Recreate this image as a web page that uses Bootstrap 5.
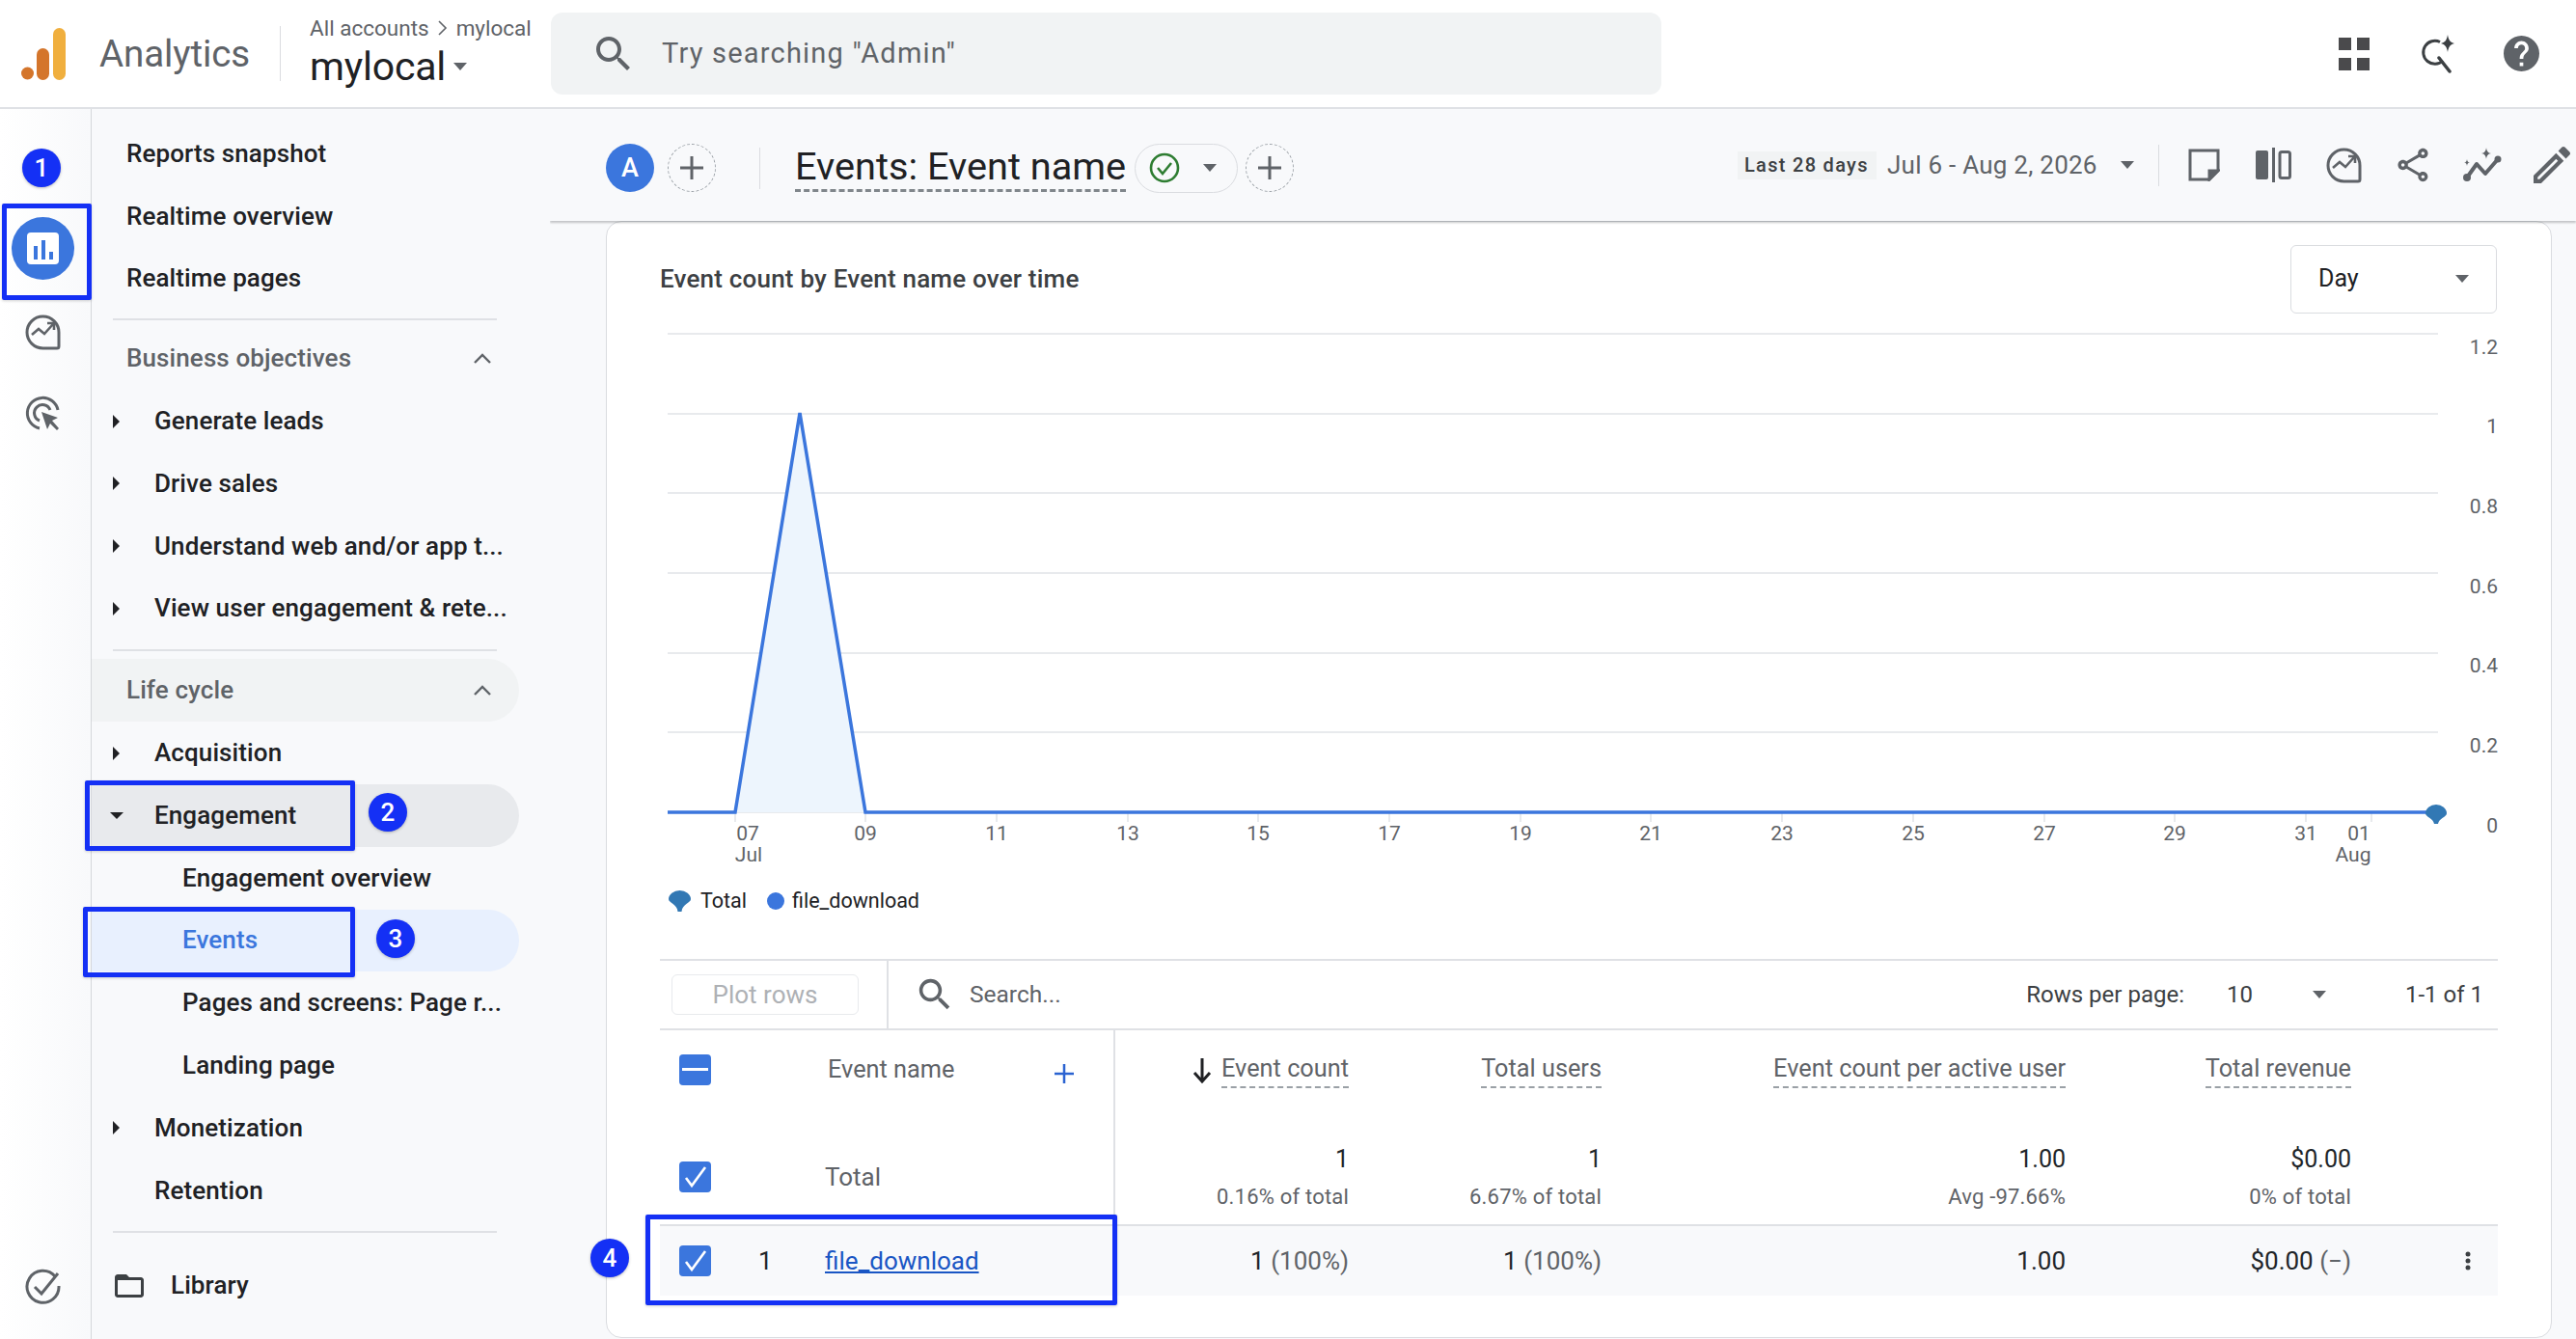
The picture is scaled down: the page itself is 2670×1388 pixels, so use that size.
<!DOCTYPE html>
<html lang="en">
<head>
<meta charset="UTF-8">
<title>Analytics - Events</title>
<link href="https://cdn.jsdelivr.net/npm/bootstrap@5.3.0/dist/css/bootstrap.min.css" rel="stylesheet">
<style>
html, body { height: 1388px; overflow: hidden; }
body { font-family: Roboto, "Liberation Sans", sans-serif; color: #202124; background: #f8f9fb; font-size: 26px; position: relative; }
svg { display: block; flex: none; }

.ga-top { height: 113px; background: #fff; border-bottom: 2px solid #dfe1e5; }
.ga-logo { margin-left: 22px; width: 46px; height: 54px; }
.ga-brand { margin-left: 35px; width: 187px; font-size: 38.5px; color: #5f6368; letter-spacing: -.1px; }
.ga-vsep { width: 1px; background: #dadce0; }
.ga-top .ga-vsep { height: 57px; margin-right: 30px; }
.ga-crumb { font-size: 22.5px; color: #5f6368; line-height: 28px; margin-top: 0; }
.ga-account { font-size: 41px; line-height: 50px; margin-top: 1px; letter-spacing: -.2px; }
.ga-crumb-box { width: 250px; margin-top: -2px; }
.ga-caret { width: 0; height: 0; border-left: 7px solid transparent; border-right: 7px solid transparent; border-top: 8px solid #5f6368; display: inline-block; flex: none; }
.ga-search { width: 1151px; height: 85px; background: #f1f3f4; border-radius: 12px; color: #5f6368; font-size: 29px; letter-spacing: 1.2px; padding-left: 47px; gap: 32px; }
.ga-top-icons { position: absolute; right: 0; top: 0; height: 111px; }
.ga-grid-ic { margin-right: 50px; }
.ga-spark-ic { margin-right: 48px; }
.ga-help-ic { margin-right: 38px; }

.ga-rail { width: 95px; background: linear-gradient(90deg, #fff, #f8f9fb); border-right: 1px solid #d5d7db; position: relative; height: 1275px; }
.ga-rail-active { width: 65px; height: 65px; border-radius: 50%; background: #3b76dd; margin: 112px 0 0 12px; }
.ga-rail-ic { margin: 0 0 0 26px; }
.ga-side { width: 475px; padding-top: 14px; }
.ga-row { height: 64.8px; font-size: 26px; font-weight: 500; letter-spacing: .1px; }
.ga-l0 { padding-left: 36px; }
.ga-l1 { padding-left: 22px; }
.ga-l2 { padding-left: 94px; }
.ga-slot { width: 43px; flex: none; display: flex; align-items: center; }
.ga-head { width: 443px; color: #5f6368; justify-content: space-between; padding-right: 29px; border-radius: 0 33px 33px 0; }
.ga-pill { width: 443px; border-radius: 0 33px 33px 0; }
.ga-pill-grey { background: #e8eaed; }
.ga-pill-lite { background: #f1f3f4; }
.ga-pill-blue { background: #e8f0fe; color: #3b76dd; }
.ga-rule { width: 398px; height: 2px; background: #dfe1e5; margin-left: 22px; }
.ga-ar { width: 0; height: 0; border-top: 7px solid transparent; border-bottom: 7px solid transparent; border-left: 7px solid #202124; }
.ga-ad { width: 0; height: 0; border-left: 7px solid transparent; border-right: 7px solid transparent; border-top: 7px solid #202124; margin-left: -3px; }

.ga-main { flex: 1; min-width: 0; position: relative; }
.ga-sub { height: 116px; padding: 6px 0 0 58px; box-shadow: 0 2px 2px rgba(60,64,67,.28); clip-path: inset(0 0 -6px 0); position: relative; z-index: 2; background: #f8f9fb; }
.ga-avatar { width: 50px; height: 50px; border-radius: 50%; background: #3b76dd; color: #fff; font-size: 27px; font-weight: 500; }
.ga-add { width: 50px; height: 50px; border-radius: 50%; border: 1px dashed #9aa0a6; margin-left: 14px; }
.ga-add-end { margin-left: 8px; }
.ga-sub .ga-vsep { height: 43px; margin: 0 36px 0 45px; }
.ga-title { font-size: 39.7px; line-height: 46px; border-bottom: 3px dashed #80868b; width: 343px; white-space: nowrap; }
.ga-status { width: 107px; height: 51px; border: 1px solid #dadce0; border-radius: 26px; margin-left: 9px; padding-left: 14px; gap: 24px; }
.ga-sub-right { position: absolute; right: 0; top: 0; height: 116px; }
.ga-chip { background: #f1f3f4; font-size: 20px; height: 29px; line-height: 29px; padding: 0 7px; letter-spacing: 1.3px; color: #3c4043; font-weight: 500; width: 144px; white-space: nowrap; }
.ga-date { font-size: 26px; color: #5f6368; margin-left: 11px; width: 218px; white-space: nowrap; letter-spacing: .25px; }
.ga-sub-right .ga-vsep { height: 43px; margin: 0 30px 0 25px; }

.ga-panel { margin: 0 25px 0 58px; background: #fff; border: 1px solid #dadce0; border-radius: 16px; padding: 0 55px; height: 1158px; }
.ga-panel-head { height: 100px; justify-content: space-between; padding: 18px 0 0 0; }
.ga-panel-title { font-size: 26px; letter-spacing: .2px; color: #3c4043; font-weight: 500; }
.ga-day { width: 214px; height: 71px; border: 1px solid #dadce0; border-radius: 6px; padding: 0 28px 0 28px; justify-content: space-between; margin-right: 1px; font-size: 25px; }
.ga-chart text { font-family: Roboto, "Liberation Sans", sans-serif; font-size: 21px; fill: #5f6368; }
.ga-legend { height: 48px; font-size: 21.5px; margin-left: 9px; margin-bottom: 36px; }
.ga-toolbar { height: 74px; border-top: 2px solid #dfe1e5; border-bottom: 2px solid #dfe1e5; }
.ga-plot-box { width: 237px; height: 100%; border-right: 2px solid #dfe1e5; padding-left: 12px; }
.ga-plot { width: 194px; height: 42px; border: 1px solid #e8eaed; border-radius: 6px; background: #fff; color: #aeb1b5; font-size: 26px; padding: 0; }
.ga-find { margin-left: 30px; gap: 18px; color: #5f6368; font-size: 24.5px; }
.ga-pager { margin-left: auto; font-size: 24px; color: #3c4043; padding-right: 15px; }
.ga-pager-num { margin-left: 44px; width: 89px; }
.ga-pager-count { margin-left: 82px; }

.ga-tbl { table-layout: fixed; width: 1905px; margin: 0; --bs-table-bg: transparent; --bs-table-border-color: transparent; font-size: 26px; }
.ga-tbl > * > tr > * { padding: 0; border: 0; vertical-align: top; text-align: right; font-weight: 400; }
.ga-tbl > * > tr > .ga-dim { text-align: left; border-right: 2px solid #dfe1e5; }
.ga-tbl .ga-hrow { height: 97px; }
.ga-tbl > thead > .ga-hrow > th { padding-top: 21px; color: #5f6368; font-size: 25.3px; }
.ga-dash { display: inline-block; line-height: 37px; border-bottom: 2px dashed #9aa0a6; }
.ga-cell { display: flex; align-items: center; }
.ga-box { width: 33px; height: 32px; border-radius: 4px; background: #3b76dd; display: flex; align-items: center; justify-content: center; margin-left: 20px; flex: none; }
.ga-tbl .ga-trow { height: 105px; border-bottom: 2px solid #dfe1e5; }
.ga-tbl > tbody > .ga-trow > td { padding-top: 20px; }
.ga-tbl > tbody > .ga-trow > td:not(.ga-dim) { padding-top: 21px; }
.ga-num { line-height: 32px; font-size: 25px; }
.ga-pct { line-height: 32px; margin-top: 7px; font-size: 22px; color: #5f6368; letter-spacing: .2px; }
.ga-tbl .ga-drow { height: 73px; }
.ga-tbl > tbody > .ga-drow > td { background: #f8f9fb; vertical-align: middle; }
.ga-tbl > tbody > .ga-drow > .ga-dim { border-right: 0; }
.ga-tbl > tbody > .ga-drow > .ga-menu { padding-right: 28px; }
.ga-grey { color: #5f6368; }
.ga-link { color: #1a56c4; text-decoration: underline; }

.ga-mark { position: absolute; border: 5px solid #1430f5; border-radius: 2px; box-shadow: 0 1px 3px rgba(0,0,0,.18); z-index: 5; }
.ga-mark1 { left: 2px; top: 211px; width: 93px; height: 100px; }
.ga-mark2 { left: 88px; top: 809px; width: 280px; height: 73px; }
.ga-mark3 { left: 86px; top: 940px; width: 282px; height: 73px; }
.ga-mark4 { left: 669px; top: 1259px; width: 489px; height: 94px; }
.ga-step { position: absolute; width: 40px; height: 40px; border-radius: 50%; background: #1430f5; color: #fff; font-size: 26px; font-weight: 500; z-index: 6; box-shadow: 0 1px 3px rgba(0,0,0,.25); }
.ga-step1 { left: 23px; top: 154px; }
.ga-step2 { left: 382px; top: 822px; }
.ga-step3 { left: 390px; top: 953px; }
.ga-step4 { left: 612px; top: 1284px; }
</style>
</head>
<body>

<header class="ga-top d-flex align-items-center">
  <svg class="ga-logo" viewBox="0 0 46 54"><circle cx="6.5" cy="47" r="6.5" fill="#d4752b"/><rect x="16" y="21" width="13" height="33" rx="6.5" fill="#d4752b"/><rect x="33" y="0" width="13" height="54" rx="6.5" fill="#f0af3e"/></svg>
  <div class="ga-brand">Analytics</div>
  <div class="ga-vsep"></div>
  <div class="ga-crumb-box">
    <div class="ga-crumb d-flex align-items-center gap-2">All accounts
      <svg width="12" height="18" viewBox="0 0 12 18"><path d="M2 2l7 7-7 7" fill="none" stroke="#5f6368" stroke-width="1.6"/></svg>
      mylocal</div>
    <div class="ga-account d-flex align-items-center gap-2">mylocal <span class="ga-caret"></span></div>
  </div>
  <div class="ga-search d-flex align-items-center">
    <svg width="36" height="36" viewBox="3 3 18 18" fill="#5f6368"><path d="M15.5 14h-.79l-.28-.27C15.41 12.59 16 11.11 16 9.5 16 5.91 13.09 3 9.5 3S3 5.91 3 9.5 5.91 16 9.5 16c1.61 0 3.09-.59 4.23-1.57l.27.28v.79l5 4.99L20.49 19l-4.99-5zm-6 0C7.01 14 5 11.99 5 9.5S7.01 5 9.500 5 14 7.010 14 9.500 11.990 14 9.500 14z"/></svg>
    <span>Try searching "Admin"</span>
  </div>
  <div class="ga-top-icons d-flex align-items-center">
    <svg class="ga-grid-ic" width="33" height="34" viewBox="0 0 33 34" fill="#4a4a4c"><rect width="13" height="13"/><rect x="19" width="13" height="13"/><rect y="21" width="13" height="13"/><rect x="19" y="21" width="13" height="13"/></svg>
    <svg class="ga-spark-ic" width="40" height="40" viewBox="0 0 40 40"><path d="M22 7.500A12 12 0 1 0 25 27" fill="none" stroke="#3c4043" stroke-width="3"/><path d="M21 24l11 14" stroke="#3c4043" stroke-width="3.500" stroke-linecap="round"/><path d="M30 0c1 6 3 8 7 9-4 1-6 3-7 9-1-6-3-8-7-9 4-1 6-3 7-9z" fill="#3c4043"/></svg>
    <svg class="ga-help-ic" width="37" height="37" viewBox="2 2 20 20" fill="#5f6368"><path d="M12 2C6.480 2 2 6.480 2 12s4.480 10 10 10 10-4.480 10-10S17.520 2 12 2zm1 17h-2v-2h2v2zm2.070-7.750l-.9.920C13.450 12.900 13 13.500 13 15h-2v-.5c0-1.100.45-2.100 1.170-2.830l1.240-1.260c.37-.36.59-.86.59-1.410 0-1.100-.9-2-2-2s-2 .9-2 2H8c0-2.210 1.790-4 4-4s4 1.790 4 4c0 .88-.36 1.680-.93 2.250z"/></svg>
  </div>
</header>

<div class="d-flex">
  <aside class="ga-rail">
    <div class="ga-rail-active d-flex align-items-center justify-content-center">
      <svg width="33" height="33" viewBox="0 0 33 33"><rect width="33" height="33" rx="4" fill="#fff"/><rect x="7" y="14" width="4" height="14" fill="#3b76dd"/><rect x="15" y="8" width="4" height="20" fill="#3b76dd"/><rect x="23" y="20" width="4" height="8" fill="#3b76dd"/></svg>
    </div>
    <svg class="ga-rail-ic" style="margin-top:36px" width="37" height="37" viewBox="0 0 37 37" fill="none" stroke="#5f6368" stroke-width="3"><path d="M18.500 2A16.500 16.500 0 0 0 18.500 35H33a2 2 0 0 0 2-2V18.500A16.500 16.500 0 0 0 18.500 2z"/><path d="M7 21l7-6 6 5 9-10M23 9h7v7" stroke-width="2.600"/></svg>
    <svg class="ga-rail-ic" style="margin-top:47px" width="37" height="37" viewBox="0 0 37 37" fill="none" stroke="#5f6368" stroke-width="3"><path d="M15 34A16 16 0 1 1 34 15"/><path d="M15 26A8.500 8.500 0 1 1 26 15"/><path d="M17 17l17 6-6 3 7 8-2 2-7-7-3 6z" fill="#5f6368" stroke="none"/></svg>
    <svg class="ga-rail-ic" style="margin-top:868px" width="37" height="37" viewBox="0 0 37 37" fill="none" stroke="#5f6368" stroke-width="3"><path d="M31 8A16.500 16.500 0 1 0 35 18"/><path d="M10 19l7 7L34 5"/></svg>
  </aside>

  <nav class="ga-side">
    <div class="ga-row ga-l0 d-flex align-items-center">Reports snapshot</div>
    <div class="ga-row ga-l0 d-flex align-items-center">Realtime overview</div>
    <div class="ga-row ga-l0 d-flex align-items-center">Realtime pages</div>
    <div class="ga-rule" style="margin-top:9px;margin-bottom:7px"></div>
    <div class="ga-row ga-l0 ga-head d-flex align-items-center"><span>Business objectives</span>
      <svg width="18" height="11" viewBox="0 0 18 11"><path d="M1 10l8-8 8 8" fill="none" stroke="#5f6368" stroke-width="2.400"/></svg></div>
    <div class="ga-row ga-l1 d-flex align-items-center"><span class="ga-slot"><span class="ga-ar"></span></span>Generate leads</div>
    <div class="ga-row ga-l1 d-flex align-items-center"><span class="ga-slot"><span class="ga-ar"></span></span>Drive sales</div>
    <div class="ga-row ga-l1 d-flex align-items-center"><span class="ga-slot"><span class="ga-ar"></span></span>Understand web and/or app t...</div>
    <div class="ga-row ga-l1 d-flex align-items-center"><span class="ga-slot"><span class="ga-ar"></span></span>View user engagement &amp; rete...</div>
    <div class="ga-rule" style="margin-top:10px;margin-bottom:8px"></div>
    <div class="ga-row ga-l0 ga-head ga-pill-lite d-flex align-items-center"><span>Life cycle</span>
      <svg width="18" height="11" viewBox="0 0 18 11"><path d="M1 10l8-8 8 8" fill="none" stroke="#5f6368" stroke-width="2.400"/></svg></div>
    <div class="ga-row ga-l1 d-flex align-items-center"><span class="ga-slot"><span class="ga-ar"></span></span>Acquisition</div>
    <div class="ga-row ga-l1 ga-pill ga-pill-grey d-flex align-items-center"><span class="ga-slot"><span class="ga-ad"></span></span>Engagement</div>
    <div class="ga-row ga-l2 d-flex align-items-center">Engagement overview</div>
    <div class="ga-row ga-l2 ga-pill ga-pill-blue d-flex align-items-center">Events</div>
    <div class="ga-row ga-l2 d-flex align-items-center">Pages and screens: Page r...</div>
    <div class="ga-row ga-l2 d-flex align-items-center">Landing page</div>
    <div class="ga-row ga-l1 d-flex align-items-center"><span class="ga-slot"><span class="ga-ar"></span></span>Monetization</div>
    <div class="ga-row ga-l1 d-flex align-items-center"><span class="ga-slot"></span>Retention</div>
    <div class="ga-rule" style="margin-top:9px"></div>
    <div class="ga-row d-flex align-items-center" style="padding-left:24px;margin-top:23px">
      <svg width="30" height="30" viewBox="2 2 20 20" fill="#3c4043" style="margin-right:28px"><path d="M20 6h-8l-2-2H4c-1.100 0-1.990.9-1.990 2L2 18c0 1.100.9 2 2 2h16c1.100 0 2-.9 2-2V8c0-1.100-.9-2-2-2zm0 12H4V8h16v10z"/></svg>
      Library</div>
  </nav>

  <main class="ga-main">
    <div class="ga-sub d-flex align-items-center">
      <div class="ga-avatar d-flex align-items-center justify-content-center">A</div>
      <div class="ga-add d-flex align-items-center justify-content-center">
        <svg width="26" height="26" viewBox="0 0 26 26"><path d="M13 1v24M1 13h24" stroke="#5f6368" stroke-width="3"/></svg>
      </div>
      <div class="ga-vsep"></div>
      <div class="ga-title">Events: Event name</div>
      <div class="ga-status d-flex align-items-center">
        <svg width="32" height="32" viewBox="0 0 32 32" fill="none" stroke="#2e7d32" stroke-width="2.600"><circle cx="16" cy="16" r="14"/><path d="M9 16l5 6 9-11"/></svg>
        <span class="ga-caret"></span>
      </div>
      <div class="ga-add ga-add-end d-flex align-items-center justify-content-center">
        <svg width="26" height="26" viewBox="0 0 26 26"><path d="M13 1v24M1 13h24" stroke="#5f6368" stroke-width="3"/></svg>
      </div>
      <div class="ga-sub-right d-flex align-items-center">
        <span class="ga-chip">Last 28 days</span>
        <span class="ga-date">Jul 6 - Aug 2, 2026</span>
        <span class="ga-caret ms-4"></span>
        <div class="ga-vsep"></div>
        <svg width="33" height="34" viewBox="0 0 33 34" fill="none" stroke="#5f6368" stroke-width="3"><path d="M2 2h29v21l-9 9H2z"/><path d="M22 32v-9h9z" fill="#5f6368"/></svg>
        <svg style="margin-left:37px" width="37" height="36" viewBox="0 0 37 36" fill="#5f6368"><rect y="3" width="13" height="30" rx="2"/><rect x="17" width="3" height="36"/><rect x="25" y="4.500" width="10.500" height="27" rx="2" fill="none" stroke="#5f6368" stroke-width="3"/></svg>
        <svg style="margin-left:36px" width="37" height="37" viewBox="0 0 37 37" fill="none" stroke="#5f6368" stroke-width="3"><path d="M18.500 2A16.500 16.500 0 0 0 18.500 35H33a2 2 0 0 0 2-2V18.500A16.500 16.500 0 0 0 18.500 2z"/><path d="M7 21l7-6 6 5 9-10M23 9h7v7" stroke-width="2.600"/></svg>
        <svg style="margin-left:36px" width="34" height="38" viewBox="3 1 18 22" fill="#5f6368"><path d="M18 16.080c-.76 0-1.440.3-1.960.77L8.910 12.700c.05-.23.09-.46.09-.7s-.04-.47-.09-.7l7.050-4.110c.54.5 1.250.81 2.040.81 1.660 0 3-1.340 3-3s-1.340-3-3-3-3 1.340-3 3c0 .24.04.47.09.7L8.040 9.810C7.500 9.310 6.790 9 6 9c-1.660 0-3 1.340-3 3s1.340 3 3 3c.79 0 1.500-.31 2.040-.81l7.120 4.160c-.05.21-.08.43-.08.65 0 1.610 1.310 2.920 2.920 2.920s2.920-1.310 2.920-2.920-1.310-2.920-2.920-2.920zM18 4c.55 0 1 .45 1 1s-.45 1-1 1-1-.45-1-1 .45-1 1-1zM6 13c-.55 0-1-.45-1-1s.45-1 1-1 1 .45 1 1-.45 1-1 1zm12 7.020c-.55 0-1-.45-1-1s.45-1 1-1 1 .45 1 1-.45 1-1 1z"/></svg>
        <svg style="margin-left:34px" width="42" height="36" viewBox="0 0 42 36"><path d="M5 31l10-14 9 10 13-15" fill="none" stroke="#5f6368" stroke-width="4" stroke-linecap="round" stroke-linejoin="round"/><circle cx="5" cy="31" r="4" fill="#5f6368"/><circle cx="37" cy="12" r="3.500" fill="#5f6368"/><path d="M25 0c.5 4 2 5.500 5 6-3 .5-4.500 2-5 6-.5-4-2-5.500-5-6 3-.5 4.500-2 5-6zM5 12c.3 2.500 1 3.200 3 3.500-2 .3-2.700 1-3 3.500-.3-2.500-1-3.200-3-3.500 2-.3 2.700-1 3-3.500z" fill="#5f6368"/></svg>
        <svg style="margin-left:32px;margin-right:6px" width="38" height="38" viewBox="3 3 18 18" fill="#5f6368"><path d="M14.060 9.020l.92.92L5.920 19H5v-.92l9.060-9.060M17.660 3c-.25 0-.51.1-.7.29l-1.830 1.830 3.750 3.750 1.830-1.830c.39-.39.39-1.020 0-1.410l-2.340-2.340c-.2-.2-.45-.29-.71-.29zm-3.600 3.190L3 17.250V21h3.750L17.810 9.940l-3.750-3.750z"/></svg>
      </div>
    </div>

    <section class="ga-panel">
      <div class="ga-panel-head d-flex align-items-center">
        <div class="ga-panel-title">Event count by Event name over time</div>
        <div class="ga-day d-flex align-items-center"><span>Day</span><span class="ga-caret"></span></div>
      </div>

      <svg class="ga-chart" width="1905" height="580" viewBox="684 330 1905 580" style="overflow:visible">
        <g stroke="#e8eaed" stroke-width="2">
          <path d="M692 346H2527M692 429H2527M692 511H2527M692 594H2527M692 677H2527M692 759H2527M692 842H2527"/>
          <path d="M762 842v10M897 842v10M1033 842v10M1169 842v10M1304 842v10M1440 842v10M1576 842v10M1711 842v10M1847 842v10M1983 842v10M2119 842v10M2254 842v10M2390 842v10M2458 842v10"/>
        </g>
        <path d="M762 842L829 428L897 842Z" fill="#edf5fd"/>
        <path d="M692 842H762L829 428L897 842H2525" fill="none" stroke="#3b76dd" stroke-width="3.500"/>
        <path d="M2514 843a11 9 0 0 1 22 0c0 4-8 5-9 11h-4c-1-6-9-7-9-11z" fill="#3278b4"/>
        <g text-anchor="end">
          <text x="2589" y="367">1.2</text><text x="2589" y="449">1</text><text x="2589" y="532">0.8</text><text x="2589" y="615">0.6</text><text x="2589" y="697">0.4</text><text x="2589" y="780">0.2</text><text x="2589" y="863">0</text>
        </g>
        <g text-anchor="middle">
          <text x="775" y="871">07</text><text x="897" y="871">09</text><text x="1033" y="871">11</text><text x="1169" y="871">13</text><text x="1304" y="871">15</text><text x="1440" y="871">17</text><text x="1576" y="871">19</text><text x="1711" y="871">21</text><text x="1847" y="871">23</text><text x="1983" y="871">25</text><text x="2119" y="871">27</text><text x="2254" y="871">29</text><text x="2390" y="871">31</text><text x="2445" y="871">01</text>
          <text x="776" y="893">Jul</text><text x="2439" y="893">Aug</text>
        </g>
      </svg>

      <div class="ga-legend d-flex align-items-center">
        <svg width="23" height="22" viewBox="0 0 23 22" class="me-2"><path d="M0 9A11.500 9 0 0 1 23 9C23 13 14 14 13.500 22h-4C9 14 0 13 0 9z" fill="#3278b4"/></svg>
        <span style="margin-left:2px">Total</span>
        <svg width="18" height="18" viewBox="0 0 18 18" style="margin-left:21px;margin-right:8px"><circle cx="9" cy="9" r="9" fill="#3b76dd"/></svg>
        <span>file_download</span>
      </div>

      <div class="ga-toolbar d-flex align-items-center">
        <div class="ga-plot-box d-flex align-items-center"><button class="ga-plot" type="button">Plot rows</button></div>
        <div class="ga-find d-flex align-items-center">
          <svg width="36" height="36" viewBox="2 2 20 20" fill="#5f6368"><path d="M15.500 14h-.79l-.28-.27C15.410 12.590 16 11.110 16 9.500 16 5.910 13.090 3 9.500 3S3 5.910 3 9.500 5.910 16 9.500 16c1.610 0 3.090-.59 4.230-1.570l.27.28v.79l5 4.990L20.490 19l-4.990-5zm-6 0C7.010 14 5 11.990 5 9.500S7.010 5 9.500 5 14 7.010 14 9.500 11.990 14 9.500 14z"/></svg>
          <span>Search...</span>
        </div>
        <div class="ga-pager d-flex align-items-center">
          <span>Rows per page:</span>
          <span class="ga-pager-num">10</span>
          <span class="ga-caret"></span>
          <span class="ga-pager-count">1-1 of 1</span>
        </div>
      </div>

      <table class="table ga-tbl">
        <colgroup><col style="width:471px"><col style="width:243px"><col style="width:262px"><col style="width:481px"><col style="width:296px"><col style="width:152px"></colgroup>
        <thead>
          <tr class="ga-hrow">
            <th class="ga-dim">
              <div class="ga-cell" style="height:40px">
                <span class="ga-box"><svg width="27" height="4"><rect width="27" height="3" fill="#fff"/></svg></span>
                <span style="margin-left:121px;width:135px;white-space:nowrap">Event name</span>
                <svg class="ms-auto" style="margin-right:40px;margin-top:8px" width="22" height="22" viewBox="0 0 22 22"><path d="M11 1v20M1 11h20" stroke="#2b63d1" stroke-width="2.500"/></svg>
              </div>
            </th>
            <th><div class="d-flex justify-content-end align-items-center gap-2">
              <svg style="margin-right:2px" width="20" height="28" viewBox="0 0 20 28" fill="none" stroke="#202124" stroke-width="3"><path d="M10 2v24M2 17l8 9 8-9"/></svg>
              <span class="ga-dash">Event count</span></div></th>
            <th><span class="ga-dash">Total users</span></th>
            <th><span class="ga-dash">Event count per active user</span></th>
            <th><span class="ga-dash">Total revenue</span></th>
            <th></th>
          </tr>
        </thead>
        <tbody>
          <tr class="ga-trow">
            <td class="ga-dim"><div class="ga-cell" style="height:70px">
              <span class="ga-box"><svg width="24" height="24" viewBox="0 0 24 24" fill="none" stroke="#fff" stroke-width="2.600"><path d="M2 13l6 8L22 2"/></svg></span>
              <span class="ga-grey" style="margin-left:118px">Total</span></div></td>
            <td><div class="ga-num">1</div><div class="ga-pct">0.16% of total</div></td>
            <td><div class="ga-num">1</div><div class="ga-pct">6.67% of total</div></td>
            <td><div class="ga-num">1.00</div><div class="ga-pct">Avg -97.66%</div></td>
            <td><div class="ga-num">$0.00</div><div class="ga-pct">0% of total</div></td>
            <td></td>
          </tr>
          <tr class="ga-drow">
            <td class="ga-dim"><div class="ga-cell">
              <span class="ga-box"><svg width="24" height="24" viewBox="0 0 24 24" fill="none" stroke="#fff" stroke-width="2.600"><path d="M2 13l6 8L22 2"/></svg></span>
              <span style="margin-left:49px;width:69px">1</span><a class="ga-link" href="#">file_download</a></div></td>
            <td>1 <span class="ga-grey">(100%)</span></td>
            <td>1 <span class="ga-grey">(100%)</span></td>
            <td>1.00</td>
            <td>$0.00 <span class="ga-grey">(−)</span></td>
            <td class="ga-menu"><svg class="ms-auto" width="6" height="20" viewBox="0 0 6 20" fill="#3c4043"><circle cx="3" cy="3" r="2.500"/><circle cx="3" cy="10" r="2.500"/><circle cx="3" cy="17" r="2.500"/></svg></td>
          </tr>
        </tbody>
      </table>
    </section>
  </main>
</div>

<div class="ga-mark ga-mark1"></div>
<div class="ga-mark ga-mark2"></div>
<div class="ga-mark ga-mark3"></div>
<div class="ga-mark ga-mark4"></div>
<div class="ga-step ga-step1 d-flex align-items-center justify-content-center">1</div>
<div class="ga-step ga-step2 d-flex align-items-center justify-content-center">2</div>
<div class="ga-step ga-step3 d-flex align-items-center justify-content-center">3</div>
<div class="ga-step ga-step4 d-flex align-items-center justify-content-center">4</div>

<script src="https://cdn.jsdelivr.net/npm/bootstrap@5.3.0/dist/js/bootstrap.bundle.min.js"></script>
</body>
</html>
